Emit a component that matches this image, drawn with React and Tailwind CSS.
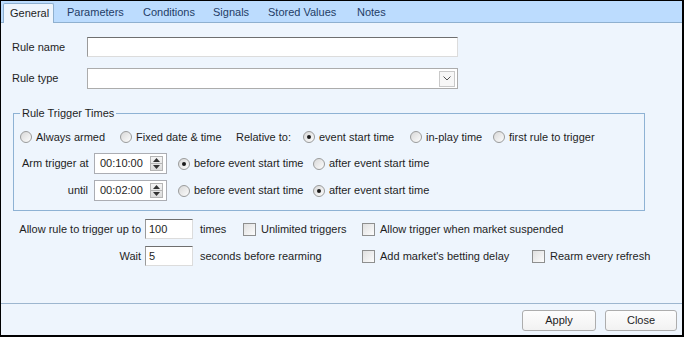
import React, { useState } from "react";

const tabs = [
  { label: "Parameters", w: "w-[76px]" },
  { label: "Conditions", w: "w-[70px]" },
  { label: "Signals", w: "w-[55px]" },
  { label: "Stored Values", w: "w-[89px]" },
  { label: "Notes", w: "w-[50px]" },
];

function Radio({ checked, label }) {
  return (
    <span className="flex items-center gap-[4px] whitespace-nowrap">
      <span className="flex items-center justify-center w-[12px] h-[12px] rounded-full border border-[#9a9b9b] bg-gradient-to-br from-[#d8d8d8] to-[#fdfdfd]">
        {checked && <span className="w-[4px] h-[4px] rounded-full bg-[#1b1b1b]" />}
      </span>
      <span>{label}</span>
    </span>
  );
}

function Check({ label }) {
  return (
    <span className="flex items-center gap-[5px] whitespace-nowrap">
      <span className="w-[13px] h-[13px] border border-[#8e8f8f] bg-gradient-to-br from-[#e0e0e0] to-[#fcfcfc]" />
      <span>{label}</span>
    </span>
  );
}

function Spin({ value }) {
  return (
    <div className="flex items-center w-[73px] h-[21px] bg-white border border-[#abadb3]">
      <span className="flex-1 pl-[5px]">{value}</span>
      <div className="flex flex-col w-[13px] h-[15px] mr-[3px] border border-[#b5b5b5] bg-gradient-to-b from-[#f4f4f4] to-[#dcdcdc]">
        <div className="flex-1 flex items-center justify-center border-b border-[#b5b5b5]">
          <svg width="7" height="4" viewBox="0 0 7 4"><path d="M0 4 L3.5 0 L7 4 Z" fill="#333" /></svg>
        </div>
        <div className="flex-1 flex items-center justify-center">
          <svg width="7" height="4" viewBox="0 0 7 4"><path d="M0 0 L3.5 4 L7 0 Z" fill="#333" /></svg>
        </div>
      </div>
    </div>
  );
}

const inputCls =
  "h-[20px] bg-white border border-t-[#6f6f6f] border-l-[#9a9a9a] border-r-[#dcdcdc] border-b-[#dcdcdc] px-[3px] leading-[18px]";

export default function App() {
  const [active] = useState("General");

  return (
    <div className="w-[684px] h-[337px] flex flex-col bg-[#eef5fd] border-t border-l border-r-2 border-b-2 border-black font-['Liberation_Sans',Arial,sans-serif] text-[11px] text-[#1e1e1e]">
      {/* tab strip */}
      <div className="h-[22px] flex items-end pl-[2px] bg-[#bcdcfe] border-b border-[#8fb0cf]">
        <div className="w-[51px] h-[20px] -mb-px pl-[6px] flex items-center bg-[#eef5fd] border border-b-0 border-[#8fb0cf] rounded-t-[2px]">
          {active}
        </div>
        {tabs.map((t) => (
          <div key={t.label} className={`${t.w} h-[20px] pl-[13px] flex items-center text-[#1f3c66]`}>
            {t.label}
          </div>
        ))}
      </div>

      {/* body */}
      <div className="flex-1 flex flex-col pl-[11px]">
        <div className="mt-[14px] flex items-center h-[20px]">
          <span className="w-[75px]">Rule name</span>
          <div className={`${inputCls} w-[371px]`} />
        </div>
        <div className="mt-[11px] flex items-center h-[21px]">
          <span className="w-[75px]">Rule type</span>
          <div className="w-[371px] h-[21px] flex items-center justify-end bg-white border border-[#acacac] pr-[2px]">
            <div className="w-[16px] h-[16px] flex items-center justify-center border border-[#c9c9c9] bg-[#f7f7f7]">
              <svg width="8" height="5" viewBox="0 0 8 5"><path d="M0.5 0.5 L4 4 L7.5 0.5" fill="none" stroke="#555" strokeWidth="1" /></svg>
            </div>
          </div>
        </div>

        <fieldset className="mt-[18px] ml-[1px] w-[632px] h-[104px] border border-[#8eb2d4] px-0">
          <legend className="ml-[6px] px-[2px] leading-[13px]">Rule Trigger Times</legend>
          <div className="mt-[9px] h-[16px] flex items-center pl-[6px]">
            <div className="w-[100px]"><Radio label="Always armed" /></div>
            <div className="w-[116px]"><Radio label="Fixed date & time" /></div>
            <div className="w-[67px]">Relative to:</div>
            <div className="w-[107px]"><Radio checked label="event start time" /></div>
            <div className="w-[83px]"><Radio label="in-play time" /></div>
            <Radio label="first rule to trigger" />
          </div>
          <div className="mt-[8px] h-[21px] flex items-center pl-[8px]">
            <span className="w-[66px] whitespace-nowrap">Arm trigger at</span>
            <div className="ml-[6px]"><Spin value="00:10:00" /></div>
            <div className="ml-[11px] w-[135px]"><Radio checked label="before event start time" /></div>
            <Radio label="after event start time" />
          </div>
          <div className="mt-[6px] h-[21px] flex items-center pl-[8px]">
            <span className="w-[66px] text-right">until</span>
            <div className="ml-[6px]"><Spin value="00:02:00" /></div>
            <div className="ml-[11px] w-[135px]"><Radio label="before event start time" /></div>
            <Radio checked label="after event start time" />
          </div>
        </fieldset>

        <div className="mt-[8px] h-[20px] flex items-center">
          <span className="w-[129px] text-right whitespace-nowrap">Allow rule to trigger up to</span>
          <div className={`${inputCls} ml-[4px] w-[48px]`}>100</div>
          <span className="ml-[7px] w-[43px]">times</span>
          <div className="w-[119px]"><Check label="Unlimited triggers" /></div>
          <Check label="Allow trigger when market suspended" />
        </div>
        <div className="mt-[7px] h-[20px] flex items-center">
          <span className="w-[129px] text-right">Wait</span>
          <div className={`${inputCls} ml-[4px] w-[48px]`}>5</div>
          <span className="ml-[7px] w-[162px]">seconds before rearming</span>
          <div className="w-[170px]"><Check label="Add market's betting delay" /></div>
          <Check label="Rearm every refresh" />
        </div>
      </div>

      {/* footer */}
      <div className="h-[32px] border-t border-[#9db6cf] flex items-start justify-end gap-[9px] pt-[6px] pr-[5px]">
        <button className="w-[74px] h-[21px] rounded-[3px] border border-[#adadad] bg-gradient-to-b from-[#fdfdfd] to-[#f2f2f2]">Apply</button>
        <button className="w-[72px] h-[21px] rounded-[3px] border border-[#adadad] bg-gradient-to-b from-[#fdfdfd] to-[#f2f2f2]">Close</button>
      </div>
    </div>
  );
}
